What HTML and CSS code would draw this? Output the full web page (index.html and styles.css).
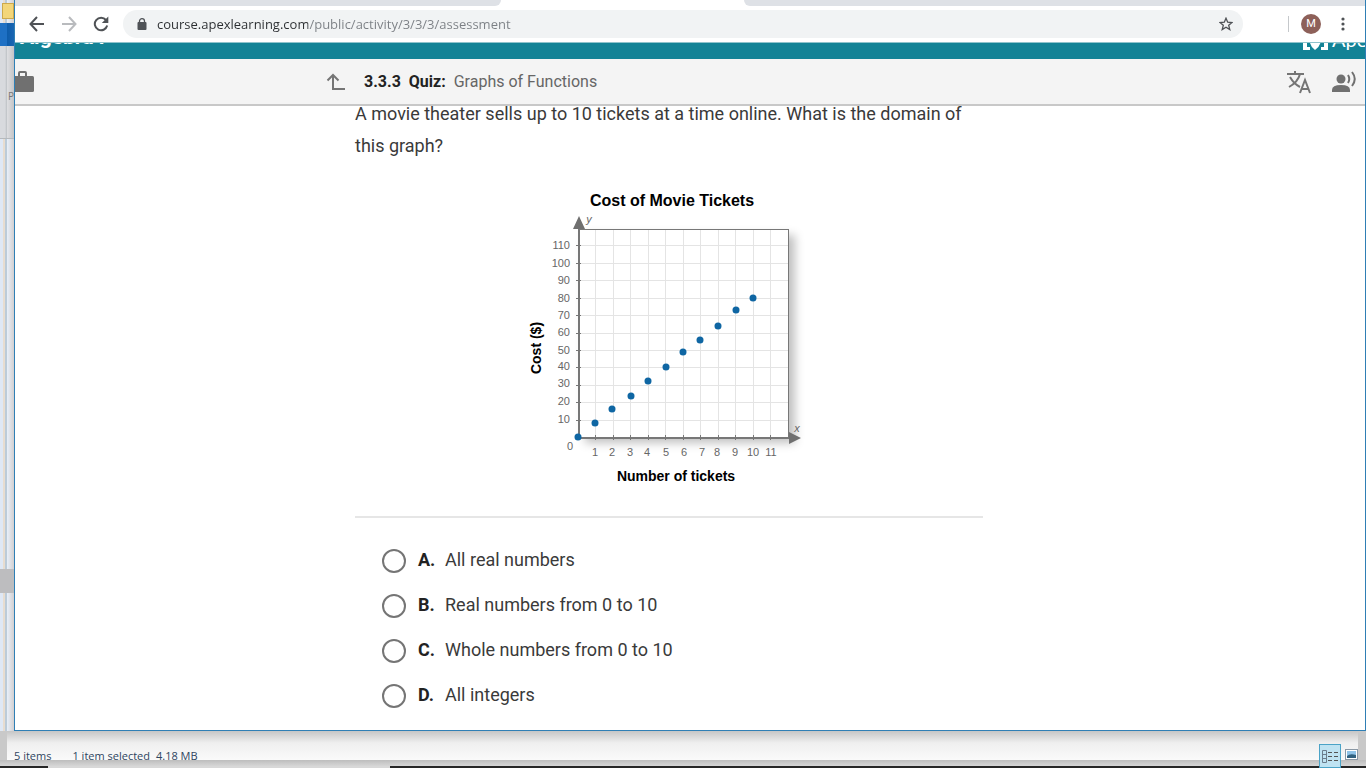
FILE: index.html
```
<!DOCTYPE html>
<html lang="en">
<head>
    <meta charset="UTF-8">
    <meta name="viewport" content="width=device-width, initial-scale=1.0">
    <title>3.3.3 Quiz: Graphs of Functions</title>
    <link rel="stylesheet" href="styles.css">
</head>
<body>

<div class="desktop">
    <div class="windows">
        <div class="behind">
            <div class="behind-folder"></div>
            <div class="behind-tab"></div>
            <div class="behind-ribbon">P</div>
            <div class="behind-list"></div>
            <div class="behind-selected"></div>
            <div class="behind-rest"></div>
        </div>

        <div class="browser">
            <div class="tabs">
                <div class="tabs-left"></div>
                <div class="tabs-active"></div>
                <div class="tabs-right"></div>
            </div>

            <div class="toolbar">
                <button class="nav-btn" aria-label="Back">
                    <svg width="16" height="16" viewBox="0 0 16 16" fill="none" stroke="#4f5256" stroke-width="2"><path d="M15 8H2M8 1L1.500 8L8 15"/></svg>
                </button>
                <button class="nav-btn" aria-label="Forward">
                    <svg width="16" height="16" viewBox="0 0 16 16" fill="none" stroke="#b9bbbe" stroke-width="2"><path d="M1 8H14M8 1L14.500 8L8 15"/></svg>
                </button>
                <button class="nav-btn" aria-label="Reload">
                    <svg width="16" height="16" viewBox="0 0 16 16"><path d="M13 4A6.300 6.300 0 1 0 14.200 9.600" fill="none" stroke="#4f5256" stroke-width="2"/><path d="M15.300 0.500V7H8.800z" fill="#4f5256"/></svg>
                </button>
                <div class="omnibox">
                    <svg width="10" height="12" viewBox="0 0 10 12"><rect x="0.500" y="4" width="9" height="8" rx="1" fill="#4f5256"/><path d="M2.500 5V3a2.500 2.300 0 0 1 5 0V5" fill="none" stroke="#4f5256" stroke-width="1.300"/></svg>
                    <input class="url" type="text" aria-label="Address" value="course.apexlearning.com/public/activity/3/3/3/assessment">
                    <button class="star" aria-label="Bookmark">
                        <svg width="14" height="14" viewBox="0 0 14 14" fill="none" stroke="#4f5256" stroke-width="1.300"><path d="M7 1.200L8.700 5.200L13 5.500L9.700 8.300L10.800 12.600L7 10.300L3.200 12.600L4.300 8.300L1 5.500L5.300 5.200z"/></svg>
                    </button>
                </div>
                <div class="divider"></div>
                <button class="avatar" aria-label="Profile">M</button>
                <button class="menu" aria-label="Menu">
                    <svg width="4" height="14" viewBox="0 0 4 14" fill="#4f5256"><circle cx="2" cy="2" r="1.600"/><circle cx="2" cy="7" r="1.600"/><circle cx="2" cy="12" r="1.600"/></svg>
                </button>
            </div>

            <div class="course-bar">
                <span class="course-name">Algebra I</span>
                <span class="brand">
                    <svg width="25" height="20" viewBox="0 0 25 20" fill="#fff"><path d="M0 0H7V3H4V16H7V19H0zM18 0H25V19H18V16H21V3H18zM7 7Q8 3 12 5Q17 3 18 8Q18 15 12 19Q8 16 7 12z"/></svg>
                    Apex
                </span>
            </div>

            <div class="quiz-bar">
                <button class="case" aria-label="Courses">
                    <svg width="20" height="22" viewBox="0 0 20 22"><path d="M0 5H17.500Q19 5 19 6.500V19.500Q19 21 17.500 21H0z" fill="#707070"/><path d="M4 5V2Q4 1 5 1H10Q11 1 11 2V5" fill="none" stroke="#707070" stroke-width="2"/></svg>
                </button>
                <div class="quiz-title">
                    <button class="up" aria-label="Up">
                        <svg width="20" height="18" viewBox="0 0 20 18" fill="none" stroke="#757575" stroke-width="2"><path d="M1.500 7.500L7 2L12.500 7.500M7 2V16H19"/></svg>
                    </button>
                    <b>3.3.3</b>
                    <b>Quiz:</b>
                    <span>Graphs of Functions</span>
                </div>
                <div class="quiz-tools">
                    <button aria-label="Translate">
                        <svg width="26" height="24" viewBox="0 0 26 24" fill="none" stroke="#757575" stroke-width="2"><path d="M1 4H18M9 1V4M4 7Q8 14 14 17M14 4Q12 12 3 17"/><path d="M14 23L19 10L24 23M16 19H22"/></svg>
                    </button>
                    <button aria-label="Read aloud">
                        <svg width="26" height="22" viewBox="0 0 26 22"><circle cx="9" cy="8" r="4.500" fill="#707070"/><path d="M0 21V19Q0 14 9 14Q18 14 18 19V21z" fill="#707070"/><path d="M16 4Q18.500 8 16 12M20 1Q25.500 8 20 15" fill="none" stroke="#707070" stroke-width="2"/></svg>
                    </button>
                </div>
            </div>

            <div class="page">
                <div class="question">
                    <p>A movie theater sells up to 10 tickets at a time online. What is the domain of this graph?</p>

                    <svg class="chart" width="300" height="320" viewBox="0 0 300 320" role="img" aria-label="Cost of Movie Tickets">
                        <text class="chart-title" x="152" y="26">Cost of Movie Tickets</text>
                        <rect class="plot" x="59" y="49" width="210" height="208"/>
                        <path class="grid" d="M75 49V257M93 49V257M110 49V257M128 49V257M145 49V257M163 49V257M180 49V257M198 49V257M215 49V257M233 49V257M250 49V257
                            M59 240H268M59 222H268M59 205H268M59 187H268M59 170H268M59 153H268M59 135H268M59 118H268M59 100H268M59 83H268M59 65H268"/>
                        <path class="frame" d="M59 49H268V257"/>
                        <path class="ticks" d="M75 255V260M93 255V260M110 255V260M128 255V260M145 255V260M163 255V260M180 255V260M198 255V260M215 255V260M233 255V260M250 255V260
                            M56 240H61M56 222H61M56 205H61M56 187H61M56 170H61M56 153H61M56 135H61M56 118H61M56 100H61M56 83H61M56 65H61"/>
                        <path class="axis" d="M59 46V258H270"/>
                        <path class="arrow" d="M59 36L53 49H65zM281 258L269 252V264z"/>
                        <g class="y-labels">
                            <text x="50" y="69">110</text>
                            <text x="50" y="87">100</text>
                            <text x="50" y="104">90</text>
                            <text x="50" y="122">80</text>
                            <text x="50" y="139">70</text>
                            <text x="50" y="156">60</text>
                            <text x="50" y="174">50</text>
                            <text x="50" y="190">40</text>
                            <text x="50" y="207">30</text>
                            <text x="50" y="225">20</text>
                            <text x="50" y="243">10</text>
                            <text x="53" y="270">0</text>
                        </g>
                        <g class="x-labels">
                            <text x="75" y="276">1</text>
                            <text x="92" y="276">2</text>
                            <text x="110" y="276">3</text>
                            <text x="127" y="276">4</text>
                            <text x="146" y="276">5</text>
                            <text x="164" y="276">6</text>
                            <text x="182" y="276">7</text>
                            <text x="197" y="276">8</text>
                            <text x="215" y="276">9</text>
                            <text x="233" y="276">10</text>
                            <text x="251" y="276">11</text>
                        </g>
                        <text class="axis-name" x="69" y="43">y</text>
                        <text class="axis-name" x="277" y="252">x</text>
                        <g class="points">
                            <circle cx="58" cy="257" r="3.500"/>
                            <circle cx="75" cy="243" r="3.500"/>
                            <circle cx="92" cy="229" r="3.500"/>
                            <circle cx="111" cy="216" r="3.500"/>
                            <circle cx="128" cy="201" r="3.500"/>
                            <circle cx="146" cy="187" r="3.500"/>
                            <circle cx="163" cy="172" r="3.500"/>
                            <circle cx="180" cy="160" r="3.500"/>
                            <circle cx="198" cy="146" r="3.500"/>
                            <circle cx="216" cy="130" r="3.500"/>
                            <circle cx="233" cy="118" r="3.500"/>
                        </g>
                        <text class="chart-label" x="156" y="301">Number of tickets</text>
                        <text class="chart-label" transform="translate(21 168) rotate(-90)">Cost ($)</text>
                    </svg>

                    <form class="answers">
                        <label><input type="radio" name="answer" value="a"><b>A.</b>All real numbers</label>
                        <label><input type="radio" name="answer" value="b"><b>B.</b>Real numbers from 0 to 10</label>
                        <label><input type="radio" name="answer" value="c"><b>C.</b>Whole numbers from 0 to 10</label>
                        <label><input type="radio" name="answer" value="d"><b>D.</b>All integers</label>
                    </form>
                </div>
            </div>
        </div>
    </div>

    <div class="status">
        <span class="status-count">5 items</span>
        <span>1 item selected</span>
        <span>4.18 MB</span>
        <div class="views">
            <button class="view view-on" aria-label="Details">
                <svg width="16" height="13" viewBox="0 0 16 13" fill="none" stroke="#6b7d8c"><path d="M0.500 0.500H4.500V12.500H0.500zM0.500 4.500H4.500M0.500 8.500H4.500"/><path d="M6 2.500H10M12 2.500H16M6 6.500H10M12 6.500H16M6 10.500H10M12 10.500H16" stroke="#555"/></svg>
            </button>
            <button class="view" aria-label="Large icons">
                <svg width="13" height="11" viewBox="0 0 13 11"><rect x="0.500" y="0.500" width="12" height="10" fill="#fff" stroke="#8a98a5"/><rect x="2" y="2" width="9" height="7" fill="#8fc3e8"/><path d="M2 7Q5 4 11 6V9H2z" fill="#31617f"/></svg>
            </button>
        </div>
    </div>
    <div class="taskbar">
        <div class="taskbar-open"></div>
    </div>
</div>

</body>
</html>
```

FILE: styles.css
```
* {
    box-sizing: border-box;
}
body {
    margin: 0;
    font-family: Roboto, Arial, sans-serif;
    color: #3a3a3a;
}
button {
    padding: 0;
    border: 0;
    background: none;
    cursor: pointer;
}
svg {
    display: block;
    flex: none;
}
.desktop {
    display: flex;
    flex-direction: column;
    height: 100vh;
    overflow: hidden;
    background: #c9c9c9;
}
.windows {
    display: flex;
    flex: 1;
    min-height: 0;
}

/* explorer windows behind the browser */
.behind {
    display: flex;
    flex-direction: column;
    width: 14px;
    background: linear-gradient(90deg, #dfe8f5 3px, #e8ddd0 3px, #e8ddd0 5px, #bccbd8 5px, #bccbd8 7px, #e8f0fa 7px, #d3cfd0 14px);
}
.behind-folder {
    height: 16px;
    margin: 3px 0 4px 2px;
    border: 1px solid #cda94c;
    background: #f3d67a;
}
.behind-tab {
    height: 23px;
    background: linear-gradient(90deg, #1e70c4 7px, #0d5cab 7px, #1b66b2 14px);
}
.behind-ribbon {
    height: 93px;
    padding: 43px 0 0 8px;
    border-bottom: 1px solid #b5b9bd;
    overflow: hidden;
    font: 10px/14px "Open Sans", sans-serif;
    color: #777;
    background: linear-gradient(90deg, #d8dade 5px, #bcc0c4 7px, #dedfe2 7px, #c4c4c6 14px);
}
.behind-list {
    flex: 430;
}
.behind-selected {
    flex: 24;
    background: #bdbdbf;
}
.behind-rest {
    flex: 138;
}

.browser {
    display: flex;
    flex: 1;
    flex-direction: column;
    min-width: 0;
    border: 1px solid #2f7fb5;
    border-top: 0;
    background: #fff;
    overflow: hidden;
}
.tabs {
    display: flex;
    height: 6px;
    flex: none;
}
.tabs-left {
    width: 36%;
    border-bottom-right-radius: 6px;
    background: #dee1e6;
}
.tabs-active {
    width: 18%;
}
.tabs-right {
    flex: 1;
    border-bottom-left-radius: 6px;
    background: #dee1e6;
}
.toolbar {
    display: flex;
    flex: none;
    align-items: center;
    height: 37px;
    padding: 0 20px 0 14px;
    border-bottom: 1px solid #8fc3cc;
}
.nav-btn {
    width: 16px;
    margin-right: 16px;
}
.omnibox {
    display: flex;
    flex: 1;
    align-items: center;
    height: 28px;
    margin: 0 45px 0 -2px;
    padding: 0 10px 0 14px;
    border-radius: 14px;
    background: #f1f3f4;
}
.url {
    flex: 1;
    margin-left: 10px;
    padding: 0;
    border: 0;
    outline: 0;
    font: 13px/20px "Open Sans", "Noto Sans", sans-serif;
    color: transparent;
    /* host name dark, path grey */
    background: linear-gradient(90deg, #2b2e31 151px, #7b7f84 151px);
    -webkit-background-clip: text;
    background-clip: text;
}
.divider {
    width: 1px;
    height: 16px;
    margin-right: 12px;
    background: #c5c8cb;
}
.avatar {
    width: 20px;
    height: 20px;
    margin-right: 20px;
    border-radius: 50%;
    font: 11px/20px Roboto, sans-serif;
    color: #fff;
    background: #8d6059;
}

.course-bar {
    display: flex;
    flex: none;
    align-items: flex-end;
    justify-content: space-between;
    height: 16px;
    padding-left: 5px;
    overflow: hidden;
    color: #fff;
    background: #138396;
}
.course-name {
    margin-bottom: 11px;
    font-size: 21px;
    line-height: 22px;
    font-weight: bold;
}
.brand {
    display: flex;
    gap: 4px;
    width: 62px;
    margin-bottom: 8px;
    font: 20px/16px Lato, sans-serif;
}
.quiz-bar {
    display: flex;
    flex: none;
    align-items: center;
    height: 47px;
    border-bottom: 2px solid #c8c8c8;
    background: #f4f4f4;
    position: relative;
    z-index: 1;
}
.case {
    width: 20px;
}
.quiz-title {
    display: flex;
    flex: 1;
    align-items: center;
    gap: 8px;
    margin-left: calc(50% - 384px);
    font-size: 16px;
    color: #666;
}
.quiz-title b {
    color: #222;
}
.up {
    margin-right: 10px;
}
.quiz-tools {
    display: flex;
    gap: 20px;
    align-items: center;
    margin-right: 7px;
}

.page {
    flex: 1;
    min-height: 0;
    padding: 0 42px 0 0;
}
.question {
    max-width: 628px;
    margin: -8px auto 0;
    font-size: 18px;
}
.question p {
    margin: 0;
    line-height: 32px;
}
.chart {
    margin: 18px auto 16px 165px;
    font-family: "Liberation Sans", Arial, sans-serif;
    text-anchor: middle;
}
.chart-title {
    font-size: 16px;
    font-weight: bold;
    fill: #000;
}
.chart-label {
    font-size: 14px;
    font-weight: bold;
    fill: #000;
}
.plot {
    fill: #fff;
    filter: drop-shadow(6px 6px 5px #c0c0c0);
}
.grid, .frame, .ticks, .axis {
    fill: none;
    stroke: #e4e4e4;
    shape-rendering: crispEdges;
}
.frame, .ticks, .axis {
    stroke: #777;
}
.axis {
    stroke-width: 2px;
}
.arrow {
    fill: #707070;
}
.y-labels, .x-labels {
    font-size: 11px;
    fill: #666;
}
.y-labels {
    text-anchor: end;
}
.axis-name {
    font-size: 11px;
    font-style: italic;
    fill: #666;
}
.points {
    fill: #0f66a3;
}
.answers {
    display: grid;
    gap: 13px;
    padding: 27px 0 0 27px;
    border-top: 2px solid #e6e6e6;
}
.answers label {
    display: flex;
    height: 32px;
    line-height: 30px;
}
.answers input {
    appearance: none;
    width: 24px;
    height: 24px;
    margin: 4px 12px 0 0;
    border: 2px solid #757575;
    border-radius: 50%;
}
.answers b {
    width: 27px;
    color: #222;
}

.status {
    display: flex;
    flex: none;
    height: 29px;
    margin: 0 8px 0 7px;
    padding: 16px 0 0 7px;
    font: 11px/18px "Open Sans", sans-serif;
    color: #2f4560;
    background: linear-gradient(#c6c6c6, #efefef 12px, #fafafa);
}
.status span {
    margin-right: 6px;
}
.status .status-count {
    margin-right: 21px;
}
.views {
    display: flex;
    align-items: flex-start;
    gap: 4px;
    margin-left: auto;
    margin-top: -3px;
    z-index: 1;
}
.view {
    padding-top: 5px;
}
.view-on {
    height: 24px;
    padding: 0 2px;
    border: 1px solid #4ba3c7;
    background: #bfe3f2;
}
.taskbar {
    flex: none;
    height: 8px;
    border-bottom: 2px solid #262626;
    background: linear-gradient(#bdbdbd, #d6d6d6);
}
.taskbar-open {
    width: 25%;
    height: 8px;
    margin-left: 48px;
    border-bottom: 2px solid #d8d8d8;
}
```
